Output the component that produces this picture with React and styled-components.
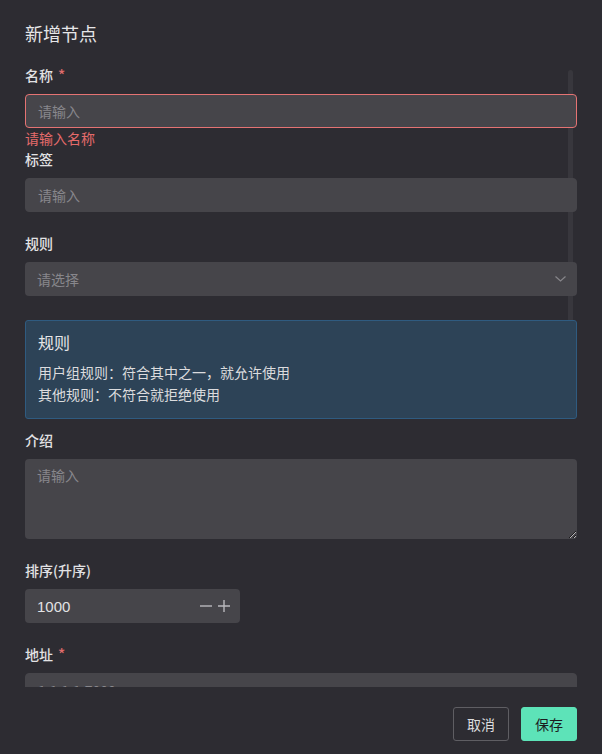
import React from "react";
import styled, { createGlobalStyle } from "styled-components";

const GlobalStyle = createGlobalStyle`
  html, body {
    margin: 0;
    padding: 0;
    background: #2d2c32;
  }
  * {
    box-sizing: border-box;
  }
`;

const font = `"Noto Sans CJK SC", "Noto Sans", "Liberation Sans", sans-serif`;

export default function App() {
  const [sort, setSort] = React.useState(1000);

  return (
    <>
      <GlobalStyle />
      <Dialog>
        <Header>新增节点</Header>
        <Body>
          <ScrollThumb />
          <Form>
            <Item>
              <Label required>名称</Label>
              <Input placeholder="请输入" invalid />
              <ErrorText>请输入名称</ErrorText>
            </Item>
            <Item spaced>
              <Label>标签</Label>
              <Input placeholder="请输入" />
            </Item>
            <Item spaced>
              <Label>规则</Label>
              <Select>
                <span>请选择</span>
                <svg width="11" height="6" viewBox="0 0 11 6" fill="none">
                  <path d="M0.5 0.5L5.5 5L10.5 0.5" stroke="#87868b" strokeWidth="1.2" />
                </svg>
              </Select>
            </Item>
            <Alert>
              <AlertTitle>规则</AlertTitle>
              <AlertLine>用户组规则：符合其中之一，就允许使用</AlertLine>
              <AlertLine>其他规则：不符合就拒绝使用</AlertLine>
            </Alert>
            <Item spaced>
              <Label>介绍</Label>
              <TextArea placeholder="请输入" />
            </Item>
            <Item spaced>
              <Label>排序(升序)</Label>
              <NumberBox>
                <NumberValue>{sort}</NumberValue>
                <StepButton onClick={() => setSort(sort - 1)}>
                  <svg width="12" height="12" viewBox="0 0 12 12">
                    <path d="M0 6H12" stroke="#b9b8bd" strokeWidth="1.4" />
                  </svg>
                </StepButton>
                <StepButton onClick={() => setSort(sort + 1)}>
                  <svg width="12" height="12" viewBox="0 0 12 12">
                    <path d="M0 6H12M6 0V12" stroke="#b9b8bd" strokeWidth="1.4" />
                  </svg>
                </StepButton>
              </NumberBox>
            </Item>
            <Item spaced>
              <Label required>地址</Label>
              <Input placeholder="1.1.1.1:7000" />
            </Item>
          </Form>
        </Body>
        <Footer>
          <Button>取消</Button>
          <Button primary>保存</Button>
        </Footer>
      </Dialog>
    </>
  );
}

const Dialog = styled.div`
  width: 602px;
  height: 754px;
  background: #2d2c32;
  display: flex;
  flex-direction: column;
  font-family: ${font};
`;

const Header = styled.div`
  padding: 21px 25px 17px;
  font-size: 18px;
  line-height: 24px;
  color: #e6e6e8;
`;

const Body = styled.div`
  position: relative;
  height: 625px;
  overflow: hidden;
`;

const ScrollThumb = styled.div`
  position: absolute;
  top: 8px;
  right: 29px;
  width: 5px;
  height: 263px;
  border-radius: 3px;
  background: #38373d;
  z-index: 0;
`;

const Form = styled.div`
  position: relative;
  z-index: 1;
  padding: 3px 25px 0;
  display: flex;
  flex-direction: column;
`;

const Item = styled.div`
  display: flex;
  flex-direction: column;
  margin-bottom: ${(p) => (p.spaced ? "21px" : "0")};
`;

const Label = styled.div`
  font-size: 14px;
  font-weight: 500;
  line-height: 20px;
  color: #e2e2e4;
  margin-bottom: 9px;

  &::after {
    content: ${(p) => (p.required ? `"*"` : "none")};
    color: #e06c6c;
    margin-left: 5px;
    font-size: 15px;
  }
`;

const fieldBase = `
  width: 100%;
  background: #46454a;
  border-radius: 4px;
  font-family: ${font};
  font-size: 14px;
  color: #e2e2e4;
  outline: none;
`;

const Input = styled.input`
  ${fieldBase}
  height: 34px;
  padding: 0 12px;
  border: 1px solid ${(p) => (p.invalid ? "#e57373" : "#46454a")};

  &::placeholder {
    color: #88878c;
  }
`;

const ErrorText = styled.div`
  font-size: 14px;
  line-height: 21px;
  color: #e56b6b;
`;

const Select = styled.div`
  ${fieldBase}
  height: 34px;
  padding: 0 11px 0 12px;
  display: flex;
  align-items: center;
  justify-content: space-between;
  color: #88878c;
`;

const Alert = styled.div`
  margin: 3px 0 11px;
  padding: 9px 12px 13px;
  background: #2d4357;
  border: 1px solid #2f5b80;
  border-radius: 3px;
`;

const AlertTitle = styled.div`
  font-size: 16px;
  line-height: 24px;
  color: #e6e6e8;
  margin-bottom: 7px;
`;

const AlertLine = styled.div`
  font-size: 14px;
  line-height: 22px;
  color: #dcdcde;
`;

const TextArea = styled.textarea`
  ${fieldBase}
  height: 80px;
  padding: 6px 12px;
  border: none;
  resize: vertical;
  display: block;

  &::placeholder {
    color: #88878c;
  }
`;

const NumberBox = styled.div`
  ${fieldBase}
  width: 215px;
  height: 34px;
  padding: 0 10px 0 12px;
  display: flex;
  align-items: center;
  gap: 5px;
`;

const NumberValue = styled.span`
  flex: 1;
  font-family: "Liberation Sans", ${font};
  font-size: 15px;
  color: #e2e2e4;
`;

const StepButton = styled.button`
  width: 13px;
  height: 20px;
  padding: 0;
  border: none;
  background: transparent;
  display: flex;
  align-items: center;
  justify-content: center;
  cursor: pointer;
`;

const Footer = styled.div`
  flex: 1;
  display: flex;
  justify-content: flex-end;
  align-items: flex-start;
  gap: 12px;
  padding: 20px 25px 0;
`;

const Button = styled.button`
  width: 56px;
  height: 34px;
  border-radius: 3px;
  font-family: ${font};
  font-size: 14px;
  cursor: pointer;
  border: 1px solid ${(p) => (p.primary ? "#5de3b8" : "#5f5e63")};
  background: ${(p) => (p.primary ? "#5de3b8" : "transparent")};
  color: ${(p) => (p.primary ? "#1c1c1f" : "#dcdcde")};
`;
